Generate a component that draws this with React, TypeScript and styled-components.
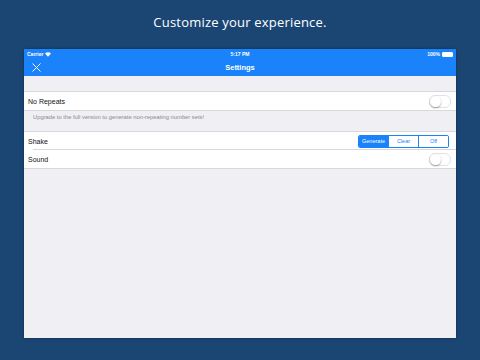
import React from "react";
import styled, { createGlobalStyle } from "styled-components";

const GlobalStyle = createGlobalStyle`
  html, body {
    margin: 0;
    padding: 0;
    background: #1b4674;
    font-family: "Liberation Sans", Arial, sans-serif;
  }
`;

const Page = styled.div`
  width: 480px;
  height: 360px;
  display: flex;
  flex-direction: column;
  align-items: center;
  background: #1b4674;
  overflow: hidden;
`;

const Heading = styled.div`
  height: 49px;
  display: flex;
  align-items: center;
  justify-content: center;
  padding-bottom: 5px;
  box-sizing: border-box;
  color: #ffffff;
  font-family: "Open Sans", sans-serif;
  font-size: 13px;
  letter-spacing: 0.2px;
`;

const Screen = styled.div`
  width: 432px;
  height: 289px;
  background: #efeff4;
  box-shadow: 0 0 3px rgba(0, 0, 0, 0.35);
  display: flex;
  flex-direction: column;
`;

const StatusBar = styled.div`
  height: 10px;
  background: #1a82fb;
  display: grid;
  grid-template-columns: 1fr auto 1fr;
  align-items: center;
  padding: 0 3px;
  color: #ffffff;
  font-size: 5px;
  font-weight: bold;
`;

const StatusLeft = styled.div`
  display: flex;
  align-items: center;
  gap: 2px;
`;

const StatusRight = styled.div`
  display: flex;
  align-items: center;
  justify-content: flex-end;
  gap: 2px;
`;

const Battery = styled.div`
  width: 9px;
  height: 3px;
  border-radius: 1px;
  background: #ffffff;
  border: 0.5px solid #ffffff;
`;

const NavBar = styled.div`
  height: 17px;
  background: #1a82fb;
  display: flex;
  align-items: center;
  justify-content: center;
  position: relative;
  color: #ffffff;
  font-size: 7.5px;
  font-weight: bold;
`;

const CloseButton = styled.div`
  position: absolute;
  left: 8px;
  top: 4px;
  display: flex;
`;

const Group = styled.div<{ $top: number }>`
  margin-top: ${(p) => p.$top}px;
  background: #ffffff;
  border-top: 0.5px solid #d8d8dc;
  border-bottom: 0.5px solid #d8d8dc;
`;

const Row = styled.div<{ $divider?: boolean }>`
  height: 18px;
  display: flex;
  align-items: center;
  justify-content: space-between;
  padding: 0 4px 0 4px;
  position: relative;
  font-size: 7px;
  color: #111111;
  box-sizing: border-box;
  ${(p) =>
    p.$divider &&
    `&::after {
      content: "";
      position: absolute;
      left: 9px;
      right: 0;
      bottom: 0;
      border-bottom: 0.5px solid #d8d8dc;
    }`}
`;

const Footer = styled.div`
  height: 20px;
  padding: 3px 0 0 9px;
  box-sizing: border-box;
  font-size: 5.8px;
  color: #8a8a8f;
`;

const Toggle = styled.div`
  width: 20px;
  height: 11px;
  border-radius: 6px;
  border: 0.8px solid #e2e2e6;
  background: #ffffff;
  position: relative;
  margin-right: 1px;
  &::after {
    content: "";
    position: absolute;
    left: 0;
    top: 0;
    width: 11px;
    height: 11px;
    border-radius: 50%;
    background: #ffffff;
    box-shadow: 0 1px 2px rgba(0, 0, 0, 0.35);
  }
`;

const Segmented = styled.div`
  display: flex;
  border: 0.8px solid #1a82fb;
  border-radius: 2px;
  overflow: hidden;
  margin-right: 3px;
`;

const Segment = styled.div<{ $active?: boolean }>`
  width: 29px;
  height: 11px;
  display: flex;
  align-items: center;
  justify-content: center;
  font-size: 5.5px;
  color: ${(p) => (p.$active ? "#ffffff" : "#1a82fb")};
  background: ${(p) => (p.$active ? "#1a82fb" : "#ffffff")};
  & + & {
    border-left: 0.8px solid #1a82fb;
  }
`;

const Wifi = () => (
  <svg width="6" height="5" viewBox="0 0 12 9">
    <path d="M6 9 L0 2.5 A9 9 0 0 1 12 2.5 Z" fill="#ffffff" />
  </svg>
);

const CloseIcon = () => (
  <svg width="9" height="9" viewBox="0 0 9 9">
    <path d="M0.5 0.5 L8.5 8.5 M8.5 0.5 L0.5 8.5" stroke="#ffffff" strokeWidth="1" />
  </svg>
);

const App = () => {
  return (
    <Page>
      <GlobalStyle />
      <Heading>Customize your experience.</Heading>
      <Screen>
        <StatusBar>
          <StatusLeft>
            Carrier <Wifi />
          </StatusLeft>
          <div>5:17 PM</div>
          <StatusRight>
            100% <Battery />
          </StatusRight>
        </StatusBar>
        <NavBar>
          <CloseButton>
            <CloseIcon />
          </CloseButton>
          Settings
        </NavBar>
        <Group $top={15}>
          <Row>
            No Repeats
            <Toggle />
          </Row>
        </Group>
        <Footer>Upgrade to the full version to generate non-repeating number sets!</Footer>
        <Group $top={0}>
          <Row $divider>
            Shake
            <Segmented>
              <Segment $active>Generate</Segment>
              <Segment>Clear</Segment>
              <Segment>Off</Segment>
            </Segmented>
          </Row>
          <Row>
            Sound
            <Toggle />
          </Row>
        </Group>
      </Screen>
    </Page>
  );
};

export default App;
